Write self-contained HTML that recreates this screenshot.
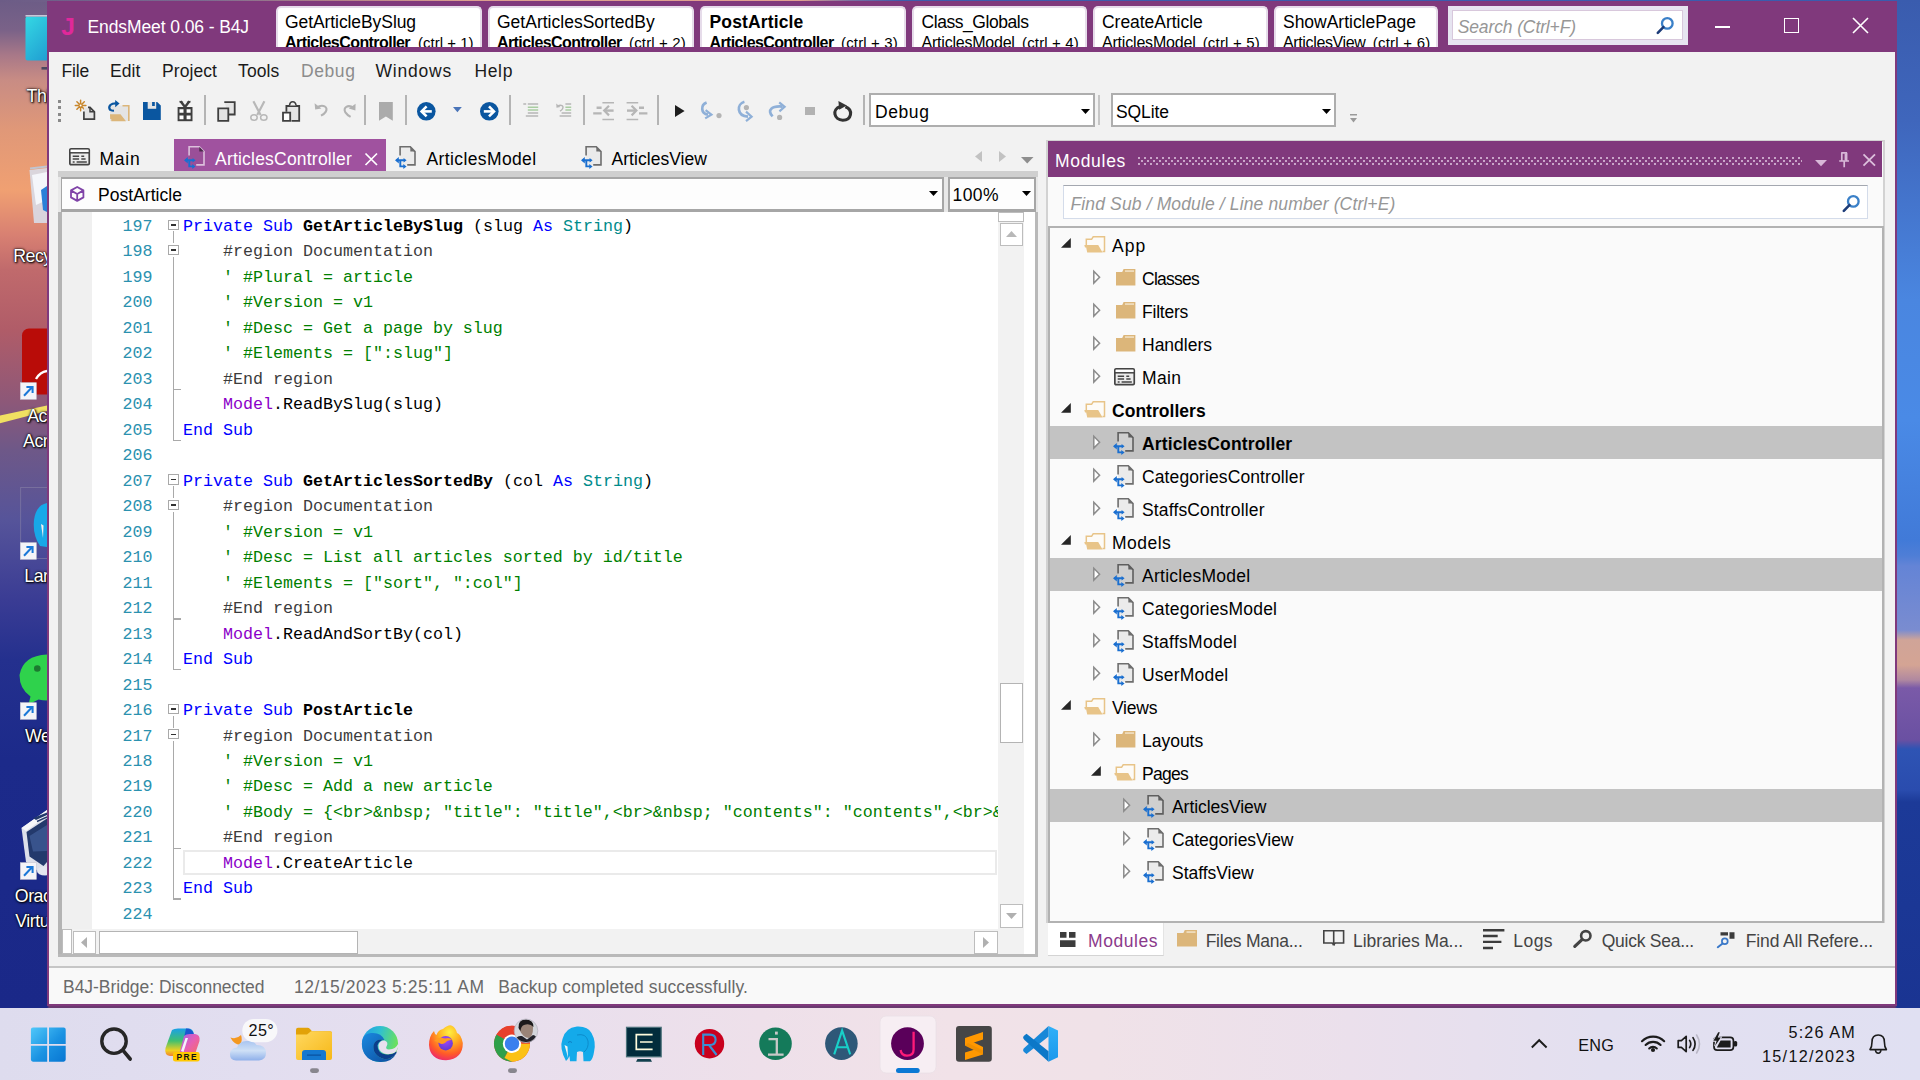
<!DOCTYPE html>
<html lang="en"><head><meta charset="utf-8"><title>EndsMeet 0.06 - B4J</title>
<style>
html,body{margin:0;padding:0;}
body{width:1920px;height:1080px;overflow:hidden;position:relative;background:#1c2c8a;font-family:"Liberation Sans",sans-serif;}
div{position:absolute;box-sizing:border-box;}
.sec{position:absolute;left:0;top:0;width:0;height:0;}
.t{position:absolute;white-space:pre;}
.m{font-family:"Liberation Mono",monospace;}
.i{position:absolute;overflow:visible;}
</style></head><body>
<div id="wallpaper" class="sec">
<div style="left:0px;top:0px;width:60px;height:1010px;background:linear-gradient(180deg,#6c5c86 0px,#7a6288 30px,#a87888 55px,#c88c84 80px,#e09878 130px,#f0a072 190px,#d88072 235px,#c06a6c 270px,#b05c68 330px,#8e5878 400px,#6e5888 450px,#56549a 520px,#3a3c94 600px,#24308e 660px,#1c2a8a 760px,#1a2888 1010px);"></div>
<div style="left:1890px;top:0px;width:30px;height:1010px;background:linear-gradient(180deg,#3a5cae 0px,#3f66bc 120px,#4a86e0 300px,#4a8ae6 420px,#417ad8 540px,#4f7ed6 556px,#6484d6 566px,#7a8cd0 630px,#d0a498 640px,#d4a494 665px,#b088a0 680px,#7a5aa8 688px,#6a50a2 740px,#2e54b4 749px,#2a4cae 790px,#1c3a98 802px,#1a3492 1010px);"></div>
<div style="left:0px;top:0px;width:1920px;height:2px;background:linear-gradient(90deg,#6c5c86 0px,#7a6a90 200px,#b08088 330px,#dca090 470px,#e0a090 800px,#7a70a0 850px,#3e5cac 900px,#3a5cae 1920px);"></div>
</div>
<div id="desktop" class="sec">
<div style="left:0;top:0;width:47px;height:1008px;overflow:hidden;">
<svg class="i" style="left:0;top:0" width="47" height="1008" viewBox="0 0 47 1008">
<defs><linearGradient id="gpc" x1="0" y1="0" x2="1" y2="1"><stop offset="0" stop-color="#34d8e4"/><stop offset="1" stop-color="#1a8ccc"/></linearGradient></defs>
<path d="M0 415.5L47 405.5V411L0 423.3Z" fill="#f0e062"/>
<rect x="25.5" y="16.5" width="40" height="44" rx="2" fill="url(#gpc)"/><rect x="25.5" y="15" width="40" height="1.6" fill="#c8c8d8"/><rect x="41.5" y="67" width="10" height="2.6" fill="#4a4860"/>
<path d="M29.5 170L47 168V223H34Z" fill="#d8dce8" opacity="0.9"/><path d="M32 175L47 172V200L36 205Z" fill="#f4f6fa"/><path d="M41 190L47 186V212L43 210Z" fill="#2a80d8"/><path d="M30 168.5L47 166.5" stroke="#c0c4d0" stroke-width="2"/>
<rect x="22" y="328.5" width="50" height="66" rx="7" fill="#b90c08"/><path d="M36 379Q40 372 47 371" fill="none" stroke="#fff" stroke-width="2.4"/>
<rect x="20.7" y="487.5" width="60" height="71" fill="none" stroke="#8a84a8" stroke-width="0.8" opacity="0.7"/>
<path d="M47 503Q36 505 34 520Q32.5 535 40 546L47 547Z" fill="#18a8e8"/><path d="M41 524L43.5 525.5L43 538Z" fill="#f0f0f0"/>
<path d="M47 654.5Q23 655.5 19.5 675Q19.5 689 30.5 696.5L28.5 704.5L38.5 699.5Q42.5 700.5 47 700.5Z" fill="#2fd24c"/><circle cx="37.3" cy="668.5" r="3.3" fill="#1c7a30"/>
<path d="M21.5 828L47 810V874H42L26 862Z" fill="#dcdfea"/>
<path d="M21.5 828L47 810V816L26 831Z" fill="#f6f7fa"/>
<path d="M26.5 832L47 818.5V862L43.5 866L29.5 856.5Z" fill="#23396c"/>
<path d="M29.5 836L47 825V851L33 851.5Z" fill="#4a6aa8" opacity="0.55"/>
<path d="M33 818L47 812.5V815L36 820Z" fill="#23396c"/><path d="M37 821.5L47 817" stroke="#23396c" stroke-width="1.4"/>
<ellipse cx="45" cy="871" rx="8" ry="4.5" fill="#e4e6f0"/>
<rect x="20.3" y="382.7" width="16" height="16.6" fill="#f4f4f8" stroke="#c8c8d4" stroke-width="0.6"/><path d="M24 395.7L32 387.3M26.4 386.9H32.6V393.09999999999997" fill="none" stroke="#1a78d8" stroke-width="2"/>
<rect x="20.3" y="542.7" width="16" height="16.6" fill="#f4f4f8" stroke="#c8c8d4" stroke-width="0.6"/><path d="M24 555.7L32 547.3000000000001M26.4 546.9000000000001H32.6V553.1" fill="none" stroke="#1a78d8" stroke-width="2"/>
<rect x="20.3" y="702.7" width="16" height="16.6" fill="#f4f4f8" stroke="#c8c8d4" stroke-width="0.6"/><path d="M24 715.7L32 707.3000000000001M26.4 706.9000000000001H32.6V713.1" fill="none" stroke="#1a78d8" stroke-width="2"/>
<rect x="20.3" y="862.7" width="16" height="16.6" fill="#f4f4f8" stroke="#c8c8d4" stroke-width="0.6"/><path d="M24 875.7L32 867.3000000000001M26.4 866.9000000000001H32.6V873.1" fill="none" stroke="#1a78d8" stroke-width="2"/>
</svg>
<span class="t" style="left:26.60px;top:88px;font-size:17.8px;line-height:17.8px;color:#fff;text-shadow:1px 1px 2px #000,0 0 3px #000,0 0 1px #000;letter-spacing:-0.5px;">This PC</span>
<span class="t" style="left:13.20px;top:248px;font-size:17.8px;line-height:17.8px;color:#fff;text-shadow:1px 1px 2px #000,0 0 3px #000,0 0 1px #000;letter-spacing:-0.5px;">Recycle Bin</span>
<span class="t" style="left:27.20px;top:408px;font-size:17.8px;line-height:17.8px;color:#fff;text-shadow:1px 1px 2px #000,0 0 3px #000,0 0 1px #000;letter-spacing:-0.5px;">Acrobat</span>
<span class="t" style="left:23.10px;top:433px;font-size:17.8px;line-height:17.8px;color:#fff;text-shadow:1px 1px 2px #000,0 0 3px #000,0 0 1px #000;letter-spacing:-0.5px;">Acrobat DC</span>
<span class="t" style="left:24.30px;top:568px;font-size:17.8px;line-height:17.8px;color:#fff;text-shadow:1px 1px 2px #000,0 0 3px #000,0 0 1px #000;letter-spacing:-0.5px;">Laragon</span>
<span class="t" style="left:25.00px;top:728px;font-size:17.8px;line-height:17.8px;color:#fff;text-shadow:1px 1px 2px #000,0 0 3px #000,0 0 1px #000;letter-spacing:-0.5px;">WeChat</span>
<span class="t" style="left:14.80px;top:888px;font-size:17.8px;line-height:17.8px;color:#fff;text-shadow:1px 1px 2px #000,0 0 3px #000,0 0 1px #000;letter-spacing:-0.5px;">Oracle VM</span>
<span class="t" style="left:15.30px;top:913px;font-size:17.8px;line-height:17.8px;color:#fff;text-shadow:1px 1px 2px #000,0 0 3px #000,0 0 1px #000;letter-spacing:-0.5px;">VirtualBox</span>
</div>
</div>
<div id="frame" class="sec">
<div style="left:0px;top:1006px;width:1920px;height:2px;background:linear-gradient(90deg,#1a2888 0px,#1a2888 47px,#6a3a70 49px,#6a3a70 1895px,#1a3492 1897px);"></div>
<div style="left:47px;top:1px;width:1850px;height:1005px;background:#f2f2f2;border:2px solid #80397c;border-top:none;"></div>
</div>
<header id="titlebar" class="sec">
<div style="left:47px;top:1px;width:1850px;height:51px;background:#80397c;"></div>
<span class="t" style="left:61.30px;top:15px;font-size:24.5px;line-height:24.5px;color:#e0289a;letter-spacing:-0.626px;font-weight:bold;">J</span>
<span class="t" style="left:87.50px;top:19px;font-size:17.5px;line-height:17.5px;color:#fff;letter-spacing:-0.101px;">EndsMeet 0.06 - B4J</span>
<div style="left:276px;top:6px;width:206px;height:41px;background:#fff;border:2px solid #e6dcea;border-bottom:none;border-radius:5px 5px 0 0;overflow:hidden;">
<span class="t" style="left:7.00px;top:6px;font-size:17.5px;line-height:17.5px;color:#000;letter-spacing:-0.080px;">GetArticleBySlug</span>
<span class="t" style="left:7.00px;top:27px;font-size:16px;line-height:16px;color:#000;letter-spacing:-0.563px;font-weight:bold;">ArticlesController</span>
<span class="t" style="left:140.00px;top:27px;font-size:15px;line-height:15px;color:#000;letter-spacing:0.008px;">(ctrl + 1)</span>
</div>
<div style="left:488px;top:6px;width:206px;height:41px;background:#fff;border:2px solid #e6dcea;border-bottom:none;border-radius:5px 5px 0 0;overflow:hidden;">
<span class="t" style="left:7.00px;top:6px;font-size:17.5px;line-height:17.5px;color:#000;letter-spacing:0.007px;">GetArticlesSortedBy</span>
<span class="t" style="left:7.00px;top:27px;font-size:16px;line-height:16px;color:#000;letter-spacing:-0.580px;font-weight:bold;">ArticlesController</span>
<span class="t" style="left:139.00px;top:27px;font-size:15px;line-height:15px;color:#000;letter-spacing:0.158px;">(ctrl + 2)</span>
</div>
<div style="left:700px;top:6px;width:206px;height:41px;background:#fff;border:2px solid #e6dcea;border-bottom:none;border-radius:5px 5px 0 0;overflow:hidden;">
<span class="t" style="left:7.50px;top:6px;font-size:17.5px;line-height:17.5px;color:#000;letter-spacing:0.147px;font-weight:bold;">PostArticle</span>
<span class="t" style="left:7.50px;top:27px;font-size:16px;line-height:16px;color:#000;letter-spacing:-0.619px;font-weight:bold;">ArticlesController</span>
<span class="t" style="left:139.00px;top:27px;font-size:15px;line-height:15px;color:#000;letter-spacing:0.158px;">(ctrl + 3)</span>
</div>
<div style="left:912px;top:6px;width:175px;height:41px;background:#fff;border:2px solid #e6dcea;border-bottom:none;border-radius:5px 5px 0 0;overflow:hidden;">
<span class="t" style="left:7.50px;top:6px;font-size:17.5px;line-height:17.5px;color:#000;letter-spacing:-0.448px;">Class_Globals</span>
<span class="t" style="left:7.50px;top:27px;font-size:16px;line-height:16px;color:#000;letter-spacing:-0.218px;">ArticlesModel</span>
<span class="t" style="left:108.00px;top:27px;font-size:15px;line-height:15px;color:#000;letter-spacing:0.158px;">(ctrl + 4)</span>
</div>
<div style="left:1093px;top:6px;width:175px;height:41px;background:#fff;border:2px solid #e6dcea;border-bottom:none;border-radius:5px 5px 0 0;overflow:hidden;">
<span class="t" style="left:7.00px;top:6px;font-size:17.5px;line-height:17.5px;color:#000;letter-spacing:-0.034px;">CreateArticle</span>
<span class="t" style="left:7.00px;top:27px;font-size:16px;line-height:16px;color:#000;letter-spacing:-0.195px;">ArticlesModel</span>
<span class="t" style="left:107.70px;top:27px;font-size:15px;line-height:15px;color:#000;letter-spacing:0.188px;">(ctrl + 5)</span>
</div>
<div style="left:1274px;top:6px;width:164px;height:41px;background:#fff;border:2px solid #e6dcea;border-bottom:none;border-radius:5px 5px 0 0;overflow:hidden;">
<span class="t" style="left:7.00px;top:6px;font-size:17.5px;line-height:17.5px;color:#000;letter-spacing:-0.018px;">ShowArticlePage</span>
<span class="t" style="left:7.00px;top:27px;font-size:16px;line-height:16px;color:#000;letter-spacing:-0.362px;">ArticlesView</span>
<span class="t" style="left:96.70px;top:27px;font-size:15px;line-height:15px;color:#000;letter-spacing:0.238px;">(ctrl + 6)</span>
</div>
<div style="left:1448px;top:6px;width:240px;height:39px;background:#e6e4f0;"></div>
<div style="left:1452px;top:10px;width:231px;height:30px;background:#fff;border:1px solid #d8c8dc;"></div>
<span class="t" style="left:1457.70px;top:19px;font-size:17.5px;line-height:17.5px;color:#979797;letter-spacing:-0.119px;font-style:italic;">Search (Ctrl+F)</span>
<div style="left:1715px;top:25.5px;width:15px;height:2px;background:#fff;"></div>
<div style="left:1784px;top:18px;width:15px;height:15px;border:1.6px solid #fff;"></div>
<svg class="i" style="left:1852px;top:17px;" width="17" height="17" viewBox="0 0 17 17"><path d="M1 1L16 16M16 1L1 16" stroke="#fff" stroke-width="1.6" fill="none"/></svg>
<svg class="i" style="left:1655.5px;top:17px;" width="18.0" height="17.0" viewBox="0 0 18 17"><circle cx="11.3" cy="6.4" r="5.3" fill="#fff" stroke="#3a80c8" stroke-width="2.3"/><path d="M7.4 10.2L1.8 15.8" stroke="#1c3c78" stroke-width="2.6" stroke-linecap="round"/></svg>
</header>
<nav id="menubar" class="sec">
<span class="t" style="left:61.50px;top:63px;font-size:17.5px;line-height:17.5px;color:#1a1a1a;letter-spacing:-0.175px;">File</span>
<span class="t" style="left:110.00px;top:63px;font-size:17.5px;line-height:17.5px;color:#1a1a1a;letter-spacing:0.086px;">Edit</span>
<span class="t" style="left:162.00px;top:63px;font-size:17.5px;line-height:17.5px;color:#1a1a1a;letter-spacing:0.076px;">Project</span>
<span class="t" style="left:238.00px;top:63px;font-size:17.5px;line-height:17.5px;color:#1a1a1a;letter-spacing:0.129px;">Tools</span>
<span class="t" style="left:301.00px;top:63px;font-size:17.5px;line-height:17.5px;color:#8c8c8c;letter-spacing:0.586px;">Debug</span>
<span class="t" style="left:375.50px;top:63px;font-size:17.5px;line-height:17.5px;color:#1a1a1a;letter-spacing:0.787px;">Windows</span>
<span class="t" style="left:474.50px;top:63px;font-size:17.5px;line-height:17.5px;color:#1a1a1a;letter-spacing:0.627px;">Help</span>
</nav>
<div id="toolbar" class="sec">
<div style="left:58px;top:100.0px;width:3px;height:3px;background:#8a8a8a;"></div>
<div style="left:58px;top:106.3px;width:3px;height:3px;background:#8a8a8a;"></div>
<div style="left:58px;top:112.6px;width:3px;height:3px;background:#8a8a8a;"></div>
<div style="left:58px;top:118.9px;width:3px;height:3px;background:#8a8a8a;"></div>
<div style="left:204px;top:95px;width:2px;height:29.5px;background:#b4b4b4;"></div>
<div style="left:363.5px;top:95px;width:2px;height:29.5px;background:#b4b4b4;"></div>
<div style="left:404.5px;top:95px;width:2px;height:29.5px;background:#b4b4b4;"></div>
<div style="left:508.5px;top:95px;width:2px;height:29.5px;background:#b4b4b4;"></div>
<div style="left:582.5px;top:95px;width:2px;height:29.5px;background:#b4b4b4;"></div>
<div style="left:656.5px;top:95px;width:2px;height:29.5px;background:#b4b4b4;"></div>
<div style="left:862.5px;top:95px;width:2px;height:29.5px;background:#b4b4b4;"></div>
<div style="left:1098px;top:95px;width:2px;height:29.5px;background:#c6c6c6;"></div>
<div style="left:869px;top:93px;width:225.5px;height:33.5px;background:#fff;border:2px solid #aeaeae;"></div>
<span class="t" style="left:875.00px;top:104px;font-size:17.5px;line-height:17.5px;color:#000;letter-spacing:0.586px;">Debug</span>
<svg class="i" style="left:1080.5px;top:109px;" width="9" height="5" viewBox="0 0 9 5"><path d="M0 0H9L4.5 5Z" fill="#000"/></svg>
<div style="left:1111px;top:93px;width:225px;height:33.5px;background:#fff;border:2px solid #aeaeae;"></div>
<span class="t" style="left:1116.00px;top:104px;font-size:17.5px;line-height:17.5px;color:#000;letter-spacing:-0.083px;">SQLite</span>
<svg class="i" style="left:1322px;top:109px;" width="9" height="5" viewBox="0 0 9 5"><path d="M0 0H9L4.5 5Z" fill="#000"/></svg>
<svg class="i" style="left:1350px;top:114px;" width="7" height="9" viewBox="0 0 7 9"><path d="M0 0H7V1.6H0Z M0 4H7L3.5 8.5Z" fill="#9a9a9a"/></svg>
<svg class="i" style="left:75px;top:99px;" width="21" height="22" viewBox="0 0 21 22"><g stroke="#c8862a" stroke-width="1.5" stroke-linecap="round"><path d="M5.6 1.2V11.8M0.3 6.5H10.9M1.9 2.8L9.3 10.2M9.3 2.8L1.9 10.2"/></g><circle cx="5.6" cy="6.5" r="1" fill="#fff"/><path d="M8.9 8.4H15L19.4 12.8V20.1H8.9Z" fill="#e4e4e4"/><path d="M8.9 12.5V20.1H19.4V12.8L15 8.4H13" fill="none" stroke="#3f3f3f" stroke-width="1.7"/><path d="M15 8.4V12.8H19.4" fill="none" stroke="#3f3f3f" stroke-width="1.5"/></svg>
<svg class="i" style="left:108px;top:100px;" width="22" height="22" viewBox="0 0 22 22"><path d="M2 5.5H21.3V21H2Z" fill="#e4e4e4"/><path d="M14.5 5.8H20.8V21" fill="none" stroke="#dcb67a" stroke-width="1.6"/><path d="M2 14.2H12.5L18 21.2H3.3L3.3 19H2.2Z" fill="#dcb67a"/><path d="M2.2 10.2C-0.5 6 3 3 9 3.4" fill="none" stroke="#0a56a0" stroke-width="2.2"/><path d="M7.2 0L11.6 3.6L7.2 7.2Z" fill="#0a56a0"/><path d="M2 9.5C3 10.5 4 10.8 6 10.6" fill="none" stroke="#0a56a0" stroke-width="2"/></svg>
<svg class="i" style="left:143.2px;top:102px;" width="18" height="18" viewBox="0 0 18 18"><path d="M0 0H14.2L17.8 3.6V17.9H0Z" fill="#0a56a0"/><path d="M4.7 0H13.2V6.8H4.7Z" fill="#e4e4e4"/><path d="M9.1 0H11.8V4H9.1Z" fill="#0a56a0"/></svg>
<svg class="i" style="left:177px;top:100px;" width="16" height="22" viewBox="0 0 16 22"><path d="M0.6 7H15.5V21.2H0.6Z" fill="#3f3f3f"/><path d="M2.5 9.2H6.5V12.8H2.5ZM9.6 9.2H13.6V12.8H9.6ZM2.5 15.6H6.5V19.2H2.5ZM9.6 15.6H13.6V19.2H9.6Z" fill="#fff"/><path d="M8 7L3.6 1.2M8 7L12.4 1.2" stroke="#3f3f3f" stroke-width="2.4" fill="none"/><path d="M2.5 1.5L6 2.5M13.5 1.5L10 2.5" stroke="#3f3f3f" stroke-width="1.6"/></svg>
<svg class="i" style="left:216.5px;top:100.5px;" width="19" height="21" viewBox="0 0 19 21"><path d="M7.3 1.2H17.7V13.5H12" fill="#e4e4e4" stroke="#3f3f3f" stroke-width="1.8"/><path d="M1.2 7.4H11.3V19.8H1.2Z" fill="#e4e4e4" stroke="#3f3f3f" stroke-width="1.8"/></svg>
<svg class="i" style="left:250px;top:101px;" width="18" height="20" viewBox="0 0 18 20"><path d="M3.4 0.3L10.6 14M14.4 0.3L7.2 14" stroke="#b8b8b8" stroke-width="2.2" fill="none"/><ellipse cx="4" cy="16.5" rx="3.2" ry="2.8" fill="none" stroke="#b8b8b8" stroke-width="1.5"/><ellipse cx="13.8" cy="16.5" rx="3.2" ry="2.8" fill="none" stroke="#b8b8b8" stroke-width="1.5"/></svg>
<svg class="i" style="left:281.5px;top:100.5px;" width="19" height="21" viewBox="0 0 19 21"><path d="M4.4 10.8V5H17.2V19.8H9.5" fill="#e4e4e4" stroke="#3f3f3f" stroke-width="1.8"/><path d="M7.6 4.6C7.6 -0.6 14 -0.6 14 4.6" fill="#f0f0f0" stroke="#3f3f3f" stroke-width="1.6"/><path d="M1 11.7H8.2V19.9H1Z" fill="#fff" stroke="#3f3f3f" stroke-width="1.8"/></svg>
<svg class="i" style="left:314px;top:102px;" width="15" height="15" viewBox="0 0 15 15"><path d="M2.5 5.6C9 1.5 14.5 5 11.8 9.6C10.8 11.3 9 12.6 7 13.6" fill="none" stroke="#b2b2b2" stroke-width="2.1"/><path d="M0.6 1.2L1.2 7.6L7.4 6.4Z" fill="#b2b2b2"/></svg>
<svg class="i" style="left:343px;top:103px;" width="14" height="15" viewBox="0 0 14 15"><path d="M10.8 5C5 1 -0.5 4.5 2.4 9.4C3.4 11 5 12.4 7.6 13.8" fill="none" stroke="#b2b2b2" stroke-width="2.1"/><path d="M12.6 0.8L12.4 7.4L5.8 5.6Z" fill="#b2b2b2"/></svg>
<svg class="i" style="left:378.7px;top:101.8px;" width="14" height="19" viewBox="0 0 14 19"><path d="M0 0H13.8V18.8L6.9 14.6L0 18.8Z" fill="#ababab"/></svg>
<svg class="i" style="left:416.8px;top:101.6px;" width="19" height="19" viewBox="0 0 19 19"><circle cx="9.3" cy="9.3" r="9.3" fill="#0a56a0"/><path d="M14.8 9.4H5" stroke="#fff" stroke-width="2.6"/><path d="M9.6 4.4L4.6 9.4L9.6 14.4" fill="none" stroke="#fff" stroke-width="2.6"/></svg>
<svg class="i" style="left:453px;top:107px;" width="9" height="5.4" viewBox="0 0 9 5.4"><path d="M0 0H8.8L4.4 5.3Z" fill="#4a74b8"/></svg>
<svg class="i" style="left:479.7px;top:101.6px;" width="19" height="19" viewBox="0 0 19 19"><circle cx="9.3" cy="9.3" r="9.3" fill="#0a56a0"/><path d="M3.8 9.4H13.6" stroke="#fff" stroke-width="2.6"/><path d="M9 4.4L14 9.4L9 14.4" fill="none" stroke="#fff" stroke-width="2.6"/></svg>
<svg class="i" style="left:522.5px;top:103px;" width="16" height="14" viewBox="0 0 16 14"><path d="M0.3 1H3.2M4.8 1H15.2M4.8 9.9H15.2M2.8 13.1H15.2" stroke="#b6b6b6" stroke-width="1.5"/><path d="M4.8 4.2H15.2M4.8 7H15.2" stroke="#a9cda2" stroke-width="1.5"/></svg>
<svg class="i" style="left:555.5px;top:103px;" width="16" height="14" viewBox="0 0 16 14"><path d="M9.4 1H15.2M5.6 9.9H15.2M3.6 13.1H15.2" stroke="#b6b6b6" stroke-width="1.5"/><path d="M9.4 4.2H15.2M9.4 7H15.2" stroke="#a9cda2" stroke-width="1.5"/><path d="M1.4 3.4C5 0.8 8.4 3 6.4 6C5.8 7 5 7.6 4 8.2" fill="none" stroke="#b6b6b6" stroke-width="1.4"/><path d="M0.2 0.6L0.5 4.8L4.4 4Z" fill="#b6b6b6"/></svg>
<svg class="i" style="left:593.4px;top:101.8px;" width="22" height="19" viewBox="0 0 22 19"><path d="M9.4 0.8H21M9.4 17.4H21" stroke="#b6b6b6" stroke-width="1.5"/><path d="M3.6 5.8H8.6M0.2 11.4H8.6" stroke="#b6b6b6" stroke-width="2.4"/><path d="M12 8.6H20.6" stroke="#b6b6b6" stroke-width="2.4"/><path d="M16 3.8L11.2 8.6L16 13.4" fill="none" stroke="#b6b6b6" stroke-width="2.2"/></svg>
<svg class="i" style="left:625.6px;top:101.8px;" width="22" height="19" viewBox="0 0 22 19"><path d="M0.6 0.8H12.2M0.6 17.4H12.2" stroke="#b6b6b6" stroke-width="1.5"/><path d="M13 5.8H18M13 11.4H21.4" stroke="#b6b6b6" stroke-width="2.4"/><path d="M1 8.6H9.6" stroke="#b6b6b6" stroke-width="2.4"/><path d="M5.6 3.8L10.4 8.6L5.6 13.4" fill="none" stroke="#b6b6b6" stroke-width="2.2"/></svg>
<svg class="i" style="left:674.6px;top:105px;" width="10" height="12" viewBox="0 0 10 12"><path d="M0 0L9.6 6L0 12Z" fill="#1e1e1e"/></svg>
<svg class="i" style="left:700px;top:101.5px;" width="22" height="18" viewBox="0 0 22 18"><path d="M6.6 0.6C0.5 3 0.6 11.4 8 12.6" fill="none" stroke="#8fb0d8" stroke-width="2.7"/><path d="M5.6 8.2L11.4 12.6L5.2 16.4" fill="none" stroke="#8fb0d8" stroke-width="2.2"/><circle cx="19" cy="13.6" r="2.6" fill="#b4b4b4"/></svg>
<svg class="i" style="left:736px;top:100.8px;" width="18" height="21" viewBox="0 0 18 21"><path d="M8.4 0.8C0.5 3 0.5 15 12 15.6" fill="none" stroke="#8fb0d8" stroke-width="2.7"/><path d="M10 10.6L15.6 15.6L10 20.2" fill="none" stroke="#8fb0d8" stroke-width="2.2"/><circle cx="10.4" cy="6.6" r="2.6" fill="#b4b4b4"/></svg>
<svg class="i" style="left:768px;top:102px;" width="19" height="19" viewBox="0 0 19 19"><path d="M4.6 14.4C-1.5 8 4 3.6 14.6 4.6" fill="none" stroke="#8fb0d8" stroke-width="2.7"/><path d="M11.2 0.4L16.6 4.8L11.4 9.4" fill="none" stroke="#8fb0d8" stroke-width="2.2"/><circle cx="11.6" cy="15.4" r="2.6" fill="#b4b4b4"/></svg>
<div style="left:805px;top:106.6px;width:9.7px;height:8.8px;background:#b2b2b2;"></div>
<svg class="i" style="left:832.5px;top:100.5px;" width="20" height="21" viewBox="0 0 20 21"><path d="M7.4 5.6C-1.5 8 1 19.2 9.8 19.2C18.5 19.2 20.6 9 12.4 5.8" fill="none" stroke="#333" stroke-width="3.1"/><path d="M5.4 0L6.2 8.8L13.8 4.6Z" fill="#333"/></svg>
</div>
<nav id="doctabs" class="sec">
<div style="left:174px;top:139px;width:212px;height:32.5px;background:#a0529f;"></div>
<span class="t" style="left:99.50px;top:151px;font-size:17.5px;line-height:17.5px;color:#000;letter-spacing:0.767px;">Main</span>
<span class="t" style="left:215.00px;top:151px;font-size:17.5px;line-height:17.5px;color:#fff;letter-spacing:0.209px;">ArticlesController</span>
<svg class="i" style="left:365px;top:153px;" width="12.5" height="12.5" viewBox="0 0 12.5 12.5"><path d="M0.5 0.5L12 12M12 0.5L0.5 12" stroke="#fff" stroke-width="1.7" fill="none"/></svg>
<span class="t" style="left:426.50px;top:151px;font-size:17.5px;line-height:17.5px;color:#000;letter-spacing:0.382px;">ArticlesModel</span>
<span class="t" style="left:611.50px;top:151px;font-size:17.5px;line-height:17.5px;color:#000;letter-spacing:0.043px;">ArticlesView</span>
<svg class="i" style="left:974.8px;top:151px;" width="7" height="11" viewBox="0 0 7 11"><path d="M7 0V11L0 5.5Z" fill="#c2c2c2"/></svg>
<svg class="i" style="left:999px;top:151px;" width="7" height="11" viewBox="0 0 7 11"><path d="M0 0V11L7 5.5Z" fill="#c2c2c2"/></svg>
<svg class="i" style="left:1020.5px;top:156.5px;" width="12.5" height="6.5" viewBox="0 0 12.5 6.5"><path d="M0 0H12.5L6.25 6.5Z" fill="#8e8e8e"/></svg>
<svg class="i" style="left:69.4px;top:148.1px;" width="22" height="18" viewBox="0 0 22 18"><rect x="0.85" y="0.85" width="19.4" height="15.8" rx="1.2" fill="#ececec" stroke="#444" stroke-width="1.7"/><rect x="1.7" y="1.7" width="17.7" height="2.3" fill="#fff"/><path d="M1 4.8H20" stroke="#444" stroke-width="1.5"/><path d="M3.7 8.2H10.1M12.3 8.2H15.2M3.7 11H10.1M12.3 11H16.6M3.7 14H5.6M7.6 14H17.8" stroke="#444" stroke-width="1.5"/></svg>
<svg class="i" style="left:184.2px;top:146.2px;" width="22" height="24" viewBox="0 0 22 24"><path d="M5.1 0.8H15.3L20 5.6V18.9H5.1Z" fill="#9a4f98"/><path d="M5.1 9.6V0.8H15.3L20 5.6V18.9H12.2" fill="none" stroke="#dcc0dc" stroke-width="1.6"/><path d="M15.3 0.8V5.6H20Z" fill="#4a2a4a"/><path d="M1.5 14.2H10M5.3 14.2V20.4H9" fill="none" stroke="#1a6fd0" stroke-width="1.9"/><path d="M0 14.2L3.8 10.9V17.5Z M11.6 14.2L8.6 11.9V16.5Z M11.6 20.4L8.3 17.9V22.9Z" fill="#1a6fd0"/></svg>
<svg class="i" style="left:395px;top:146.2px;" width="22" height="24" viewBox="0 0 22 24"><path d="M5.1 0.8H15.3L20 5.6V18.9H5.1Z" fill="#ebebeb"/><path d="M5.1 9.6V0.8H15.3L20 5.6V18.9H12.2" fill="none" stroke="#6e6e6e" stroke-width="1.6"/><path d="M15.3 0.8V5.6H20Z" fill="#6e6e6e"/><path d="M1.5 14.2H10M5.3 14.2V20.4H9" fill="none" stroke="#1a6fd0" stroke-width="1.9"/><path d="M0 14.2L3.8 10.9V17.5Z M11.6 14.2L8.6 11.9V16.5Z M11.6 20.4L8.3 17.9V22.9Z" fill="#1a6fd0"/></svg>
<svg class="i" style="left:580.6px;top:146.2px;" width="22" height="24" viewBox="0 0 22 24"><path d="M5.1 0.8H15.3L20 5.6V18.9H5.1Z" fill="#ebebeb"/><path d="M5.1 9.6V0.8H15.3L20 5.6V18.9H12.2" fill="none" stroke="#6e6e6e" stroke-width="1.6"/><path d="M15.3 0.8V5.6H20Z" fill="#6e6e6e"/><path d="M1.5 14.2H10M5.3 14.2V20.4H9" fill="none" stroke="#1a6fd0" stroke-width="1.9"/><path d="M0 14.2L3.8 10.9V17.5Z M11.6 14.2L8.6 11.9V16.5Z M11.6 20.4L8.3 17.9V22.9Z" fill="#1a6fd0"/></svg>
</nav>
<main id="editor" class="sec">
<div style="left:58px;top:171px;width:980px;height:786px;background:#fff;"></div>
<div style="left:58px;top:171px;width:980px;height:6px;background:#cfcfcf;"></div>
<div style="left:58px;top:177px;width:3.5px;height:780px;background:#b4b4b4;"></div>
<div style="left:1035.3px;top:177px;width:2.7px;height:780px;background:#b9b9b9;"></div>
<div style="left:58px;top:954.3px;width:980px;height:2.7px;background:#b9b9b9;"></div>
<div style="left:58px;top:177px;width:980px;height:35px;background:#e8e8e8;"></div>
<div style="left:61px;top:177px;width:882.5px;height:34.5px;background:#fdfdfd;border:2px solid #a6a6a6;border-left:1px solid #a6a6a6;border-bottom:3px solid #a6a6a6;"></div>
<div style="left:948px;top:177px;width:88px;height:34.5px;background:#fdfdfd;border:2px solid #a6a6a6;border-bottom:3px solid #a6a6a6;"></div>
<span class="t" style="left:98.00px;top:187px;font-size:17.5px;line-height:17.5px;color:#000;letter-spacing:0.033px;">PostArticle</span>
<svg class="i" style="left:929px;top:191px;" width="9" height="5" viewBox="0 0 9 5"><path d="M0 0H9L4.5 5Z" fill="#000"/></svg>
<span class="t" style="left:952.50px;top:187px;font-size:17.5px;line-height:17.5px;color:#000;letter-spacing:0.435px;">100%</span>
<svg class="i" style="left:1022px;top:191px;" width="9" height="5" viewBox="0 0 9 5"><path d="M0 0H9L4.5 5Z" fill="#000"/></svg>
<div style="left:61.5px;top:211.5px;width:30.5px;height:717.5px;background:#f0f0f0;"></div>
<div style="left:183px;top:850px;width:813.5px;height:25px;background:#fff;border:2.5px solid #eaeaea;"></div>
<div style="left:92px;top:212px;width:906px;height:717px;overflow:hidden;">
<span class="t m" style="left:30.50px;top:7px;font-size:16.667px;line-height:16.667px;color:#2b91af;">197</span>
<span class="t m" style="left:91.00px;top:7px;font-size:16.667px;line-height:16.667px;color:#0000ff;">Private Sub </span>
<span class="t m" style="left:211.02px;top:7px;font-size:16.667px;line-height:16.667px;color:#000;font-weight:bold;">GetArticleBySlug</span>
<span class="t m" style="left:371.04px;top:7px;font-size:16.667px;line-height:16.667px;color:#000;"> (slug </span>
<span class="t m" style="left:441.06px;top:7px;font-size:16.667px;line-height:16.667px;color:#0000ff;">As </span>
<span class="t m" style="left:471.06px;top:7px;font-size:16.667px;line-height:16.667px;color:#008b8b;">String</span>
<span class="t m" style="left:531.07px;top:7px;font-size:16.667px;line-height:16.667px;color:#000;">)</span>
<span class="t m" style="left:30.50px;top:32px;font-size:16.667px;line-height:16.667px;color:#2b91af;">198</span>
<span class="t m" style="left:91.00px;top:32px;font-size:16.667px;line-height:16.667px;color:#3c3c3c;">    #region Documentation</span>
<span class="t m" style="left:30.50px;top:58px;font-size:16.667px;line-height:16.667px;color:#2b91af;">199</span>
<span class="t m" style="left:91.00px;top:58px;font-size:16.667px;line-height:16.667px;color:#008000;">    &#x27; #Plural = article</span>
<span class="t m" style="left:30.50px;top:83px;font-size:16.667px;line-height:16.667px;color:#2b91af;">200</span>
<span class="t m" style="left:91.00px;top:83px;font-size:16.667px;line-height:16.667px;color:#008000;">    &#x27; #Version = v1</span>
<span class="t m" style="left:30.50px;top:109px;font-size:16.667px;line-height:16.667px;color:#2b91af;">201</span>
<span class="t m" style="left:91.00px;top:109px;font-size:16.667px;line-height:16.667px;color:#008000;">    &#x27; #Desc = Get a page by slug</span>
<span class="t m" style="left:30.50px;top:134px;font-size:16.667px;line-height:16.667px;color:#2b91af;">202</span>
<span class="t m" style="left:91.00px;top:134px;font-size:16.667px;line-height:16.667px;color:#008000;">    &#x27; #Elements = [&quot;:slug&quot;]</span>
<span class="t m" style="left:30.50px;top:160px;font-size:16.667px;line-height:16.667px;color:#2b91af;">203</span>
<span class="t m" style="left:91.00px;top:160px;font-size:16.667px;line-height:16.667px;color:#3c3c3c;">    #End region</span>
<span class="t m" style="left:30.50px;top:185px;font-size:16.667px;line-height:16.667px;color:#2b91af;">204</span>
<span class="t m" style="left:91.00px;top:185px;font-size:16.667px;line-height:16.667px;color:#8b00c8;">    Model</span>
<span class="t m" style="left:181.01px;top:185px;font-size:16.667px;line-height:16.667px;color:#000;">.ReadBySlug(slug)</span>
<span class="t m" style="left:30.50px;top:211px;font-size:16.667px;line-height:16.667px;color:#2b91af;">205</span>
<span class="t m" style="left:91.00px;top:211px;font-size:16.667px;line-height:16.667px;color:#0000ff;">End Sub</span>
<span class="t m" style="left:30.50px;top:236px;font-size:16.667px;line-height:16.667px;color:#2b91af;">206</span>
<span class="t m" style="left:30.50px;top:262px;font-size:16.667px;line-height:16.667px;color:#2b91af;">207</span>
<span class="t m" style="left:91.00px;top:262px;font-size:16.667px;line-height:16.667px;color:#0000ff;">Private Sub </span>
<span class="t m" style="left:211.02px;top:262px;font-size:16.667px;line-height:16.667px;color:#000;font-weight:bold;">GetArticlesSortedBy</span>
<span class="t m" style="left:401.05px;top:262px;font-size:16.667px;line-height:16.667px;color:#000;"> (col </span>
<span class="t m" style="left:461.06px;top:262px;font-size:16.667px;line-height:16.667px;color:#0000ff;">As </span>
<span class="t m" style="left:491.06px;top:262px;font-size:16.667px;line-height:16.667px;color:#008b8b;">String</span>
<span class="t m" style="left:551.07px;top:262px;font-size:16.667px;line-height:16.667px;color:#000;">)</span>
<span class="t m" style="left:30.50px;top:287px;font-size:16.667px;line-height:16.667px;color:#2b91af;">208</span>
<span class="t m" style="left:91.00px;top:287px;font-size:16.667px;line-height:16.667px;color:#3c3c3c;">    #region Documentation</span>
<span class="t m" style="left:30.50px;top:313px;font-size:16.667px;line-height:16.667px;color:#2b91af;">209</span>
<span class="t m" style="left:91.00px;top:313px;font-size:16.667px;line-height:16.667px;color:#008000;">    &#x27; #Version = v1</span>
<span class="t m" style="left:30.50px;top:338px;font-size:16.667px;line-height:16.667px;color:#2b91af;">210</span>
<span class="t m" style="left:91.00px;top:338px;font-size:16.667px;line-height:16.667px;color:#008000;">    &#x27; #Desc = List all articles sorted by id/title</span>
<span class="t m" style="left:30.50px;top:364px;font-size:16.667px;line-height:16.667px;color:#2b91af;">211</span>
<span class="t m" style="left:91.00px;top:364px;font-size:16.667px;line-height:16.667px;color:#008000;">    &#x27; #Elements = [&quot;sort&quot;, &quot;:col&quot;]</span>
<span class="t m" style="left:30.50px;top:389px;font-size:16.667px;line-height:16.667px;color:#2b91af;">212</span>
<span class="t m" style="left:91.00px;top:389px;font-size:16.667px;line-height:16.667px;color:#3c3c3c;">    #End region</span>
<span class="t m" style="left:30.50px;top:415px;font-size:16.667px;line-height:16.667px;color:#2b91af;">213</span>
<span class="t m" style="left:91.00px;top:415px;font-size:16.667px;line-height:16.667px;color:#8b00c8;">    Model</span>
<span class="t m" style="left:181.01px;top:415px;font-size:16.667px;line-height:16.667px;color:#000;">.ReadAndSortBy(col)</span>
<span class="t m" style="left:30.50px;top:440px;font-size:16.667px;line-height:16.667px;color:#2b91af;">214</span>
<span class="t m" style="left:91.00px;top:440px;font-size:16.667px;line-height:16.667px;color:#0000ff;">End Sub</span>
<span class="t m" style="left:30.50px;top:466px;font-size:16.667px;line-height:16.667px;color:#2b91af;">215</span>
<span class="t m" style="left:30.50px;top:491px;font-size:16.667px;line-height:16.667px;color:#2b91af;">216</span>
<span class="t m" style="left:91.00px;top:491px;font-size:16.667px;line-height:16.667px;color:#0000ff;">Private Sub </span>
<span class="t m" style="left:211.02px;top:491px;font-size:16.667px;line-height:16.667px;color:#000;font-weight:bold;">PostArticle</span>
<span class="t m" style="left:30.50px;top:517px;font-size:16.667px;line-height:16.667px;color:#2b91af;">217</span>
<span class="t m" style="left:91.00px;top:517px;font-size:16.667px;line-height:16.667px;color:#3c3c3c;">    #region Documentation</span>
<span class="t m" style="left:30.50px;top:542px;font-size:16.667px;line-height:16.667px;color:#2b91af;">218</span>
<span class="t m" style="left:91.00px;top:542px;font-size:16.667px;line-height:16.667px;color:#008000;">    &#x27; #Version = v1</span>
<span class="t m" style="left:30.50px;top:567px;font-size:16.667px;line-height:16.667px;color:#2b91af;">219</span>
<span class="t m" style="left:91.00px;top:567px;font-size:16.667px;line-height:16.667px;color:#008000;">    &#x27; #Desc = Add a new article</span>
<span class="t m" style="left:30.50px;top:593px;font-size:16.667px;line-height:16.667px;color:#2b91af;">220</span>
<span class="t m" style="left:91.00px;top:593px;font-size:16.667px;line-height:16.667px;color:#008000;">    &#x27; #Body = {&lt;br&gt;&amp;nbsp; &quot;title&quot;: &quot;title&quot;,&lt;br&gt;&amp;nbsp; &quot;contents&quot;: &quot;contents&quot;,&lt;br&gt;&amp;nbsp; &quot;category&quot;: 1&lt;br&gt;}</span>
<span class="t m" style="left:30.50px;top:618px;font-size:16.667px;line-height:16.667px;color:#2b91af;">221</span>
<span class="t m" style="left:91.00px;top:618px;font-size:16.667px;line-height:16.667px;color:#3c3c3c;">    #End region</span>
<span class="t m" style="left:30.50px;top:644px;font-size:16.667px;line-height:16.667px;color:#2b91af;">222</span>
<span class="t m" style="left:91.00px;top:644px;font-size:16.667px;line-height:16.667px;color:#8b00c8;">    Model</span>
<span class="t m" style="left:181.01px;top:644px;font-size:16.667px;line-height:16.667px;color:#000;">.CreateArticle</span>
<span class="t m" style="left:30.50px;top:669px;font-size:16.667px;line-height:16.667px;color:#2b91af;">223</span>
<span class="t m" style="left:91.00px;top:669px;font-size:16.667px;line-height:16.667px;color:#0000ff;">End Sub</span>
<span class="t m" style="left:30.50px;top:695px;font-size:16.667px;line-height:16.667px;color:#2b91af;">224</span>
</div>
<div style="left:168.4px;top:219.5px;width:10.5px;height:10.4px;background:#fff;border:1.6px solid #a9a9a9;"></div>
<div style="left:171.4px;top:224.0px;width:4.5px;height:1.6px;background:#333;"></div>
<div style="left:168.4px;top:244.98px;width:10.5px;height:10.4px;background:#fff;border:1.6px solid #a9a9a9;"></div>
<div style="left:171.4px;top:249.48px;width:4.5px;height:1.6px;background:#333;"></div>
<div style="left:173px;top:231.4px;width:1.4px;height:12.079999999999984px;background:#a9a9a9;"></div>
<div style="left:173px;top:256.88px;width:1.4px;height:184.16000000000003px;background:#a9a9a9;"></div>
<div style="left:173px;top:389.08px;width:8px;height:1.4px;background:#a9a9a9;"></div>
<div style="left:173px;top:439.64000000000004px;width:8px;height:1.4px;background:#a9a9a9;"></div>
<div style="left:168.4px;top:474.30000000000007px;width:10.5px;height:10.4px;background:#fff;border:1.6px solid #a9a9a9;"></div>
<div style="left:171.4px;top:478.80000000000007px;width:4.5px;height:1.6px;background:#333;"></div>
<div style="left:168.4px;top:499.7800000000001px;width:10.5px;height:10.4px;background:#fff;border:1.6px solid #a9a9a9;"></div>
<div style="left:171.4px;top:504.2800000000001px;width:4.5px;height:1.6px;background:#333;"></div>
<div style="left:173px;top:486.20000000000005px;width:1.4px;height:12.080000000000041px;background:#a9a9a9;"></div>
<div style="left:173px;top:511.68000000000006px;width:1.4px;height:158.67999999999995px;background:#a9a9a9;"></div>
<div style="left:173px;top:618.4px;width:8px;height:1.4px;background:#a9a9a9;"></div>
<div style="left:173px;top:668.96px;width:8px;height:1.4px;background:#a9a9a9;"></div>
<div style="left:168.4px;top:703.62px;width:10.5px;height:10.4px;background:#fff;border:1.6px solid #a9a9a9;"></div>
<div style="left:171.4px;top:708.12px;width:4.5px;height:1.6px;background:#333;"></div>
<div style="left:168.4px;top:729.1px;width:10.5px;height:10.4px;background:#fff;border:1.6px solid #a9a9a9;"></div>
<div style="left:171.4px;top:733.6px;width:4.5px;height:1.6px;background:#333;"></div>
<div style="left:173px;top:715.52px;width:1.4px;height:12.080000000000041px;background:#a9a9a9;"></div>
<div style="left:173px;top:741.0px;width:1.4px;height:158.67999999999995px;background:#a9a9a9;"></div>
<div style="left:173px;top:847.7199999999999px;width:8px;height:1.4px;background:#a9a9a9;"></div>
<div style="left:173px;top:898.28px;width:8px;height:1.4px;background:#a9a9a9;"></div>
<div style="left:998px;top:212px;width:26px;height:742px;background:#f2f2f2;"></div>
<div style="left:998px;top:212px;width:26px;height:10px;background:#fff;border:1.5px solid #bdbdbd;"></div>
<div style="left:1000px;top:222.5px;width:23px;height:23px;background:#fff;border:1.5px solid #bdbdbd;"></div>
<svg class="i" style="left:1006px;top:231px;" width="11" height="6" viewBox="0 0 11 6"><path d="M0 6H11L5.5 0Z" fill="#b8b8b8"/></svg>
<div style="left:1000px;top:683px;width:23px;height:60px;background:#fff;border:1.5px solid #b4b4b4;"></div>
<div style="left:1000px;top:904px;width:23px;height:24px;background:#fff;border:1.5px solid #bdbdbd;"></div>
<svg class="i" style="left:1006px;top:912.5px;" width="11" height="6" viewBox="0 0 11 6"><path d="M0 0H11L5.5 6Z" fill="#b0b0b0"/></svg>
<div style="left:61.5px;top:929px;width:936.5px;height:25px;background:#f2f2f2;"></div>
<div style="left:62px;top:929px;width:10px;height:25px;background:#fff;border:1.5px solid #bdbdbd;"></div>
<div style="left:72.5px;top:931px;width:23.5px;height:22.5px;background:#fff;border:1.5px solid #bdbdbd;"></div>
<svg class="i" style="left:81px;top:936.5px;" width="6" height="11" viewBox="0 0 6 11"><path d="M6 0V11L0 5.5Z" fill="#b0b0b0"/></svg>
<div style="left:98.5px;top:931px;width:259.5px;height:22.5px;background:#fff;border:1.5px solid #b4b4b4;"></div>
<div style="left:974px;top:931px;width:24px;height:22.5px;background:#fff;border:1.5px solid #bdbdbd;"></div>
<svg class="i" style="left:983px;top:936.5px;" width="6" height="11" viewBox="0 0 6 11"><path d="M0 0V11L6 5.5Z" fill="#b0b0b0"/></svg>
<svg class="i" style="left:70px;top:186px;" width="15" height="16" viewBox="0 0 15 16"><path d="M7.2 1L13.4 4.4V11.4L7.2 14.9L1 11.4V4.4Z M1.3 4.6L7.2 8L13.1 4.6M7.2 8V14.6" fill="none" stroke="#8044a8" stroke-width="1.8" stroke-linejoin="round"/></svg>
</main>
<aside id="modules" class="sec">
<div style="left:1046px;top:140px;width:838.5px;height:783px;background:#fafafa;border:2px solid #d2d2d2;border-bottom:none;"></div>
<div style="left:1048px;top:141px;width:834.3px;height:35.8px;background:#80397c;"></div>
<span class="t" style="left:1055.00px;top:153px;font-size:17.5px;line-height:17.5px;color:#fff;letter-spacing:0.693px;">Modules</span>
<svg class="i" style="left:1137.8px;top:156.9px;" width="664" height="8" viewBox="0 0 664 8"><defs><pattern id="grip" width="6" height="6" patternUnits="userSpaceOnUse"><rect x="0" y="0" width="2" height="2" fill="#c9a6c9"/><rect x="3" y="3" width="2" height="2" fill="#c9a6c9"/></pattern></defs><rect width="664" height="8" fill="url(#grip)"/></svg>
<svg class="i" style="left:1815px;top:160px;" width="12" height="6.2" viewBox="0 0 12 6.2"><path d="M0 0H12L6 6.2Z" fill="#d8b8d8"/></svg>
<svg class="i" style="left:1839px;top:152px;" width="11" height="16" viewBox="0 0 11 16"><path d="M2.2 0.8H8M2.8 0.8V8.6M7.6 0.8V8.6M0.2 9H10M5.2 9.4V15.2" stroke="#d8b8d8" stroke-width="1.7" fill="none"/><rect x="5.6" y="1.5" width="2" height="7" fill="#d8b8d8"/></svg>
<svg class="i" style="left:1862.8px;top:154px;" width="12.5" height="12" viewBox="0 0 12.5 12"><path d="M0.5 0.3L12 11.7M12 0.3L0.5 11.7" stroke="#dcc0dc" stroke-width="1.8" fill="none"/></svg>
<div style="left:1063px;top:185px;width:805px;height:33.5px;background:#fff;border:1.5px solid #d4dcea;border-top:1.5px solid #a4a8b0;"></div>
<span class="t" style="left:1070.50px;top:196px;font-size:17.5px;line-height:17.5px;color:#979797;letter-spacing:0.137px;font-style:italic;">Find Sub / Module / Line number (Ctrl+E)</span>
<div style="left:1048px;top:226px;width:836px;height:697px;background:#fafafa;border:2.5px solid #b2b2b2;"></div>
<span class="t" style="left:1112.00px;top:238px;font-size:17.5px;line-height:17.5px;color:#000;letter-spacing:1.021px;">App</span>
<span class="t" style="left:1142.00px;top:271px;font-size:17.5px;line-height:17.5px;color:#000;letter-spacing:-0.734px;">Classes</span>
<span class="t" style="left:1142.00px;top:304px;font-size:17.5px;line-height:17.5px;color:#000;letter-spacing:-0.220px;">Filters</span>
<span class="t" style="left:1142.00px;top:337px;font-size:17.5px;line-height:17.5px;color:#000;letter-spacing:-0.004px;">Handlers</span>
<span class="t" style="left:1142.00px;top:370px;font-size:17.5px;line-height:17.5px;color:#000;letter-spacing:0.317px;">Main</span>
<span class="t" style="left:1112.00px;top:403px;font-size:17.5px;line-height:17.5px;color:#000;letter-spacing:0.032px;font-weight:bold;">Controllers</span>
<div style="left:1050px;top:426px;width:831.5px;height:32.6px;background:#c3c3c3;"></div>
<span class="t" style="left:1142.00px;top:436px;font-size:17.5px;line-height:17.5px;color:#000;letter-spacing:0.138px;font-weight:bold;">ArticlesController</span>
<span class="t" style="left:1142.00px;top:469px;font-size:17.5px;line-height:17.5px;color:#000;letter-spacing:0.105px;">CategoriesController</span>
<span class="t" style="left:1142.00px;top:502px;font-size:17.5px;line-height:17.5px;color:#000;letter-spacing:0.145px;">StaffsController</span>
<span class="t" style="left:1112.00px;top:535px;font-size:17.5px;line-height:17.5px;color:#000;letter-spacing:0.481px;">Models</span>
<div style="left:1050px;top:558px;width:831.5px;height:32.6px;background:#c3c3c3;"></div>
<span class="t" style="left:1142.00px;top:568px;font-size:17.5px;line-height:17.5px;color:#000;letter-spacing:0.259px;">ArticlesModel</span>
<span class="t" style="left:1142.00px;top:601px;font-size:17.5px;line-height:17.5px;color:#000;letter-spacing:0.194px;">CategoriesModel</span>
<span class="t" style="left:1142.00px;top:634px;font-size:17.5px;line-height:17.5px;color:#000;letter-spacing:0.283px;">StaffsModel</span>
<span class="t" style="left:1142.00px;top:667px;font-size:17.5px;line-height:17.5px;color:#000;letter-spacing:0.199px;">UserModel</span>
<span class="t" style="left:1112.00px;top:700px;font-size:17.5px;line-height:17.5px;color:#000;letter-spacing:-0.233px;">Views</span>
<span class="t" style="left:1142.00px;top:733px;font-size:17.5px;line-height:17.5px;color:#000;letter-spacing:-0.013px;">Layouts</span>
<span class="t" style="left:1142.00px;top:766px;font-size:17.5px;line-height:17.5px;color:#000;letter-spacing:-0.704px;">Pages</span>
<div style="left:1050px;top:789px;width:831.5px;height:32.6px;background:#c3c3c3;"></div>
<span class="t" style="left:1172.00px;top:799px;font-size:17.5px;line-height:17.5px;color:#000;letter-spacing:-0.057px;">ArticlesView</span>
<span class="t" style="left:1172.00px;top:832px;font-size:17.5px;line-height:17.5px;color:#000;letter-spacing:-0.060px;">CategoriesView</span>
<span class="t" style="left:1172.00px;top:865px;font-size:17.5px;line-height:17.5px;color:#000;letter-spacing:-0.034px;">StaffsView</span>
<div style="left:1047.5px;top:923px;width:116px;height:32.5px;background:#fff;border-bottom:1px solid #d4d4d4;border-right:1px solid #e4e4e4;"></div>
<span class="t" style="left:1088.00px;top:933px;font-size:17.5px;line-height:17.5px;color:#8b3a8b;letter-spacing:0.550px;">Modules</span>
<span class="t" style="left:1205.70px;top:933px;font-size:17.5px;line-height:17.5px;color:#444;letter-spacing:-0.259px;">Files Mana...</span>
<span class="t" style="left:1353.00px;top:933px;font-size:17.5px;line-height:17.5px;color:#444;letter-spacing:-0.058px;">Libraries Ma...</span>
<span class="t" style="left:1513.30px;top:933px;font-size:17.5px;line-height:17.5px;color:#444;letter-spacing:0.438px;">Logs</span>
<span class="t" style="left:1601.70px;top:933px;font-size:17.5px;line-height:17.5px;color:#444;letter-spacing:-0.252px;">Quick Sea...</span>
<span class="t" style="left:1745.70px;top:933px;font-size:17.5px;line-height:17.5px;color:#444;letter-spacing:-0.115px;">Find All Refere...</span>
<svg class="i" style="left:1060.9px;top:237.7px;" width="10" height="10" viewBox="0 0 10 10"><path d="M9.8 0V9.8H0Z" fill="#262626"/></svg>
<svg class="i" style="left:1084.3px;top:236.1px;" width="22" height="17" viewBox="0 0 22 17"><path d="M2.3 9V3.3H7.6L9.2 0.8H20.5V15.6H18.5" fill="#fdfbf7" stroke="#e8c488" stroke-width="1.5"/><path d="M0.3 9.1H14.2L18.6 16.4H3.2L2.2 11.5H1Z" fill="#e8c488"/></svg>
<svg class="i" style="left:1093.1px;top:269.5px;" width="8" height="15" viewBox="0 0 8 15"><path d="M0.8 1.3L6.6 7.2L0.8 13.1Z" fill="#fff" stroke="#8c8c8c" stroke-width="1.5" stroke-linejoin="miter"/></svg>
<svg class="i" style="left:1116.0px;top:269px;" width="20" height="17" viewBox="0 0 20 17"><path d="M0 3H6.2L7.6 0H19.4V16.4H0Z" fill="#dcb67a"/><rect x="9" y="1.5" width="9" height="1.1" fill="#fbf3e4"/></svg>
<svg class="i" style="left:1093.1px;top:302.5px;" width="8" height="15" viewBox="0 0 8 15"><path d="M0.8 1.3L6.6 7.2L0.8 13.1Z" fill="#fff" stroke="#8c8c8c" stroke-width="1.5" stroke-linejoin="miter"/></svg>
<svg class="i" style="left:1116.0px;top:302px;" width="20" height="17" viewBox="0 0 20 17"><path d="M0 3H6.2L7.6 0H19.4V16.4H0Z" fill="#dcb67a"/><rect x="9" y="1.5" width="9" height="1.1" fill="#fbf3e4"/></svg>
<svg class="i" style="left:1093.1px;top:335.5px;" width="8" height="15" viewBox="0 0 8 15"><path d="M0.8 1.3L6.6 7.2L0.8 13.1Z" fill="#fff" stroke="#8c8c8c" stroke-width="1.5" stroke-linejoin="miter"/></svg>
<svg class="i" style="left:1116.0px;top:335px;" width="20" height="17" viewBox="0 0 20 17"><path d="M0 3H6.2L7.6 0H19.4V16.4H0Z" fill="#dcb67a"/><rect x="9" y="1.5" width="9" height="1.1" fill="#fbf3e4"/></svg>
<svg class="i" style="left:1093.1px;top:368.5px;" width="8" height="15" viewBox="0 0 8 15"><path d="M0.8 1.3L6.6 7.2L0.8 13.1Z" fill="#fff" stroke="#8c8c8c" stroke-width="1.5" stroke-linejoin="miter"/></svg>
<svg class="i" style="left:1114.3999999999999px;top:368.3px;" width="22" height="18" viewBox="0 0 22 18"><rect x="0.85" y="0.85" width="19.4" height="15.8" rx="1.2" fill="#ececec" stroke="#444" stroke-width="1.7"/><rect x="1.7" y="1.7" width="17.7" height="2.3" fill="#fff"/><path d="M1 4.8H20" stroke="#444" stroke-width="1.5"/><path d="M3.7 8.2H10.1M12.3 8.2H15.2M3.7 11H10.1M12.3 11H16.6M3.7 14H5.6M7.6 14H17.8" stroke="#444" stroke-width="1.5"/></svg>
<svg class="i" style="left:1060.9px;top:402.7px;" width="10" height="10" viewBox="0 0 10 10"><path d="M9.8 0V9.8H0Z" fill="#262626"/></svg>
<svg class="i" style="left:1084.3px;top:401.1px;" width="22" height="17" viewBox="0 0 22 17"><path d="M2.3 9V3.3H7.6L9.2 0.8H20.5V15.6H18.5" fill="#fdfbf7" stroke="#e8c488" stroke-width="1.5"/><path d="M0.3 9.1H14.2L18.6 16.4H3.2L2.2 11.5H1Z" fill="#e8c488"/></svg>
<svg class="i" style="left:1093.1px;top:434.5px;" width="8" height="15" viewBox="0 0 8 15"><path d="M0.8 1.3L6.6 7.2L0.8 13.1Z" fill="#fff" stroke="#8c8c8c" stroke-width="1.5" stroke-linejoin="miter"/></svg>
<svg class="i" style="left:1113.1999999999998px;top:432.3px;" width="22" height="24" viewBox="0 0 22 24"><path d="M5.1 0.8H15.3L20 5.6V18.9H5.1Z" fill="#cfcfcf"/><path d="M5.1 9.6V0.8H15.3L20 5.6V18.9H12.2" fill="none" stroke="#5e5e5e" stroke-width="1.6"/><path d="M15.3 0.8V5.6H20Z" fill="#5e5e5e"/><path d="M1.5 14.2H10M5.3 14.2V20.4H9" fill="none" stroke="#1a6fd0" stroke-width="1.9"/><path d="M0 14.2L3.8 10.9V17.5Z M11.6 14.2L8.6 11.9V16.5Z M11.6 20.4L8.3 17.9V22.9Z" fill="#1a6fd0"/></svg>
<svg class="i" style="left:1093.1px;top:467.5px;" width="8" height="15" viewBox="0 0 8 15"><path d="M0.8 1.3L6.6 7.2L0.8 13.1Z" fill="#fff" stroke="#8c8c8c" stroke-width="1.5" stroke-linejoin="miter"/></svg>
<svg class="i" style="left:1113.1999999999998px;top:465.3px;" width="22" height="24" viewBox="0 0 22 24"><path d="M5.1 0.8H15.3L20 5.6V18.9H5.1Z" fill="#ebebeb"/><path d="M5.1 9.6V0.8H15.3L20 5.6V18.9H12.2" fill="none" stroke="#6e6e6e" stroke-width="1.6"/><path d="M15.3 0.8V5.6H20Z" fill="#6e6e6e"/><path d="M1.5 14.2H10M5.3 14.2V20.4H9" fill="none" stroke="#1a6fd0" stroke-width="1.9"/><path d="M0 14.2L3.8 10.9V17.5Z M11.6 14.2L8.6 11.9V16.5Z M11.6 20.4L8.3 17.9V22.9Z" fill="#1a6fd0"/></svg>
<svg class="i" style="left:1093.1px;top:500.5px;" width="8" height="15" viewBox="0 0 8 15"><path d="M0.8 1.3L6.6 7.2L0.8 13.1Z" fill="#fff" stroke="#8c8c8c" stroke-width="1.5" stroke-linejoin="miter"/></svg>
<svg class="i" style="left:1113.1999999999998px;top:498.3px;" width="22" height="24" viewBox="0 0 22 24"><path d="M5.1 0.8H15.3L20 5.6V18.9H5.1Z" fill="#ebebeb"/><path d="M5.1 9.6V0.8H15.3L20 5.6V18.9H12.2" fill="none" stroke="#6e6e6e" stroke-width="1.6"/><path d="M15.3 0.8V5.6H20Z" fill="#6e6e6e"/><path d="M1.5 14.2H10M5.3 14.2V20.4H9" fill="none" stroke="#1a6fd0" stroke-width="1.9"/><path d="M0 14.2L3.8 10.9V17.5Z M11.6 14.2L8.6 11.9V16.5Z M11.6 20.4L8.3 17.9V22.9Z" fill="#1a6fd0"/></svg>
<svg class="i" style="left:1060.9px;top:534.7px;" width="10" height="10" viewBox="0 0 10 10"><path d="M9.8 0V9.8H0Z" fill="#262626"/></svg>
<svg class="i" style="left:1084.3px;top:533.1px;" width="22" height="17" viewBox="0 0 22 17"><path d="M2.3 9V3.3H7.6L9.2 0.8H20.5V15.6H18.5" fill="#fdfbf7" stroke="#e8c488" stroke-width="1.5"/><path d="M0.3 9.1H14.2L18.6 16.4H3.2L2.2 11.5H1Z" fill="#e8c488"/></svg>
<svg class="i" style="left:1093.1px;top:566.5px;" width="8" height="15" viewBox="0 0 8 15"><path d="M0.8 1.3L6.6 7.2L0.8 13.1Z" fill="#fff" stroke="#8c8c8c" stroke-width="1.5" stroke-linejoin="miter"/></svg>
<svg class="i" style="left:1113.1999999999998px;top:564.3px;" width="22" height="24" viewBox="0 0 22 24"><path d="M5.1 0.8H15.3L20 5.6V18.9H5.1Z" fill="#cfcfcf"/><path d="M5.1 9.6V0.8H15.3L20 5.6V18.9H12.2" fill="none" stroke="#5e5e5e" stroke-width="1.6"/><path d="M15.3 0.8V5.6H20Z" fill="#5e5e5e"/><path d="M1.5 14.2H10M5.3 14.2V20.4H9" fill="none" stroke="#1a6fd0" stroke-width="1.9"/><path d="M0 14.2L3.8 10.9V17.5Z M11.6 14.2L8.6 11.9V16.5Z M11.6 20.4L8.3 17.9V22.9Z" fill="#1a6fd0"/></svg>
<svg class="i" style="left:1093.1px;top:599.5px;" width="8" height="15" viewBox="0 0 8 15"><path d="M0.8 1.3L6.6 7.2L0.8 13.1Z" fill="#fff" stroke="#8c8c8c" stroke-width="1.5" stroke-linejoin="miter"/></svg>
<svg class="i" style="left:1113.1999999999998px;top:597.3px;" width="22" height="24" viewBox="0 0 22 24"><path d="M5.1 0.8H15.3L20 5.6V18.9H5.1Z" fill="#ebebeb"/><path d="M5.1 9.6V0.8H15.3L20 5.6V18.9H12.2" fill="none" stroke="#6e6e6e" stroke-width="1.6"/><path d="M15.3 0.8V5.6H20Z" fill="#6e6e6e"/><path d="M1.5 14.2H10M5.3 14.2V20.4H9" fill="none" stroke="#1a6fd0" stroke-width="1.9"/><path d="M0 14.2L3.8 10.9V17.5Z M11.6 14.2L8.6 11.9V16.5Z M11.6 20.4L8.3 17.9V22.9Z" fill="#1a6fd0"/></svg>
<svg class="i" style="left:1093.1px;top:632.5px;" width="8" height="15" viewBox="0 0 8 15"><path d="M0.8 1.3L6.6 7.2L0.8 13.1Z" fill="#fff" stroke="#8c8c8c" stroke-width="1.5" stroke-linejoin="miter"/></svg>
<svg class="i" style="left:1113.1999999999998px;top:630.3px;" width="22" height="24" viewBox="0 0 22 24"><path d="M5.1 0.8H15.3L20 5.6V18.9H5.1Z" fill="#ebebeb"/><path d="M5.1 9.6V0.8H15.3L20 5.6V18.9H12.2" fill="none" stroke="#6e6e6e" stroke-width="1.6"/><path d="M15.3 0.8V5.6H20Z" fill="#6e6e6e"/><path d="M1.5 14.2H10M5.3 14.2V20.4H9" fill="none" stroke="#1a6fd0" stroke-width="1.9"/><path d="M0 14.2L3.8 10.9V17.5Z M11.6 14.2L8.6 11.9V16.5Z M11.6 20.4L8.3 17.9V22.9Z" fill="#1a6fd0"/></svg>
<svg class="i" style="left:1093.1px;top:665.5px;" width="8" height="15" viewBox="0 0 8 15"><path d="M0.8 1.3L6.6 7.2L0.8 13.1Z" fill="#fff" stroke="#8c8c8c" stroke-width="1.5" stroke-linejoin="miter"/></svg>
<svg class="i" style="left:1113.1999999999998px;top:663.3px;" width="22" height="24" viewBox="0 0 22 24"><path d="M5.1 0.8H15.3L20 5.6V18.9H5.1Z" fill="#ebebeb"/><path d="M5.1 9.6V0.8H15.3L20 5.6V18.9H12.2" fill="none" stroke="#6e6e6e" stroke-width="1.6"/><path d="M15.3 0.8V5.6H20Z" fill="#6e6e6e"/><path d="M1.5 14.2H10M5.3 14.2V20.4H9" fill="none" stroke="#1a6fd0" stroke-width="1.9"/><path d="M0 14.2L3.8 10.9V17.5Z M11.6 14.2L8.6 11.9V16.5Z M11.6 20.4L8.3 17.9V22.9Z" fill="#1a6fd0"/></svg>
<svg class="i" style="left:1060.9px;top:699.7px;" width="10" height="10" viewBox="0 0 10 10"><path d="M9.8 0V9.8H0Z" fill="#262626"/></svg>
<svg class="i" style="left:1084.3px;top:698.1px;" width="22" height="17" viewBox="0 0 22 17"><path d="M2.3 9V3.3H7.6L9.2 0.8H20.5V15.6H18.5" fill="#fdfbf7" stroke="#e8c488" stroke-width="1.5"/><path d="M0.3 9.1H14.2L18.6 16.4H3.2L2.2 11.5H1Z" fill="#e8c488"/></svg>
<svg class="i" style="left:1093.1px;top:731.5px;" width="8" height="15" viewBox="0 0 8 15"><path d="M0.8 1.3L6.6 7.2L0.8 13.1Z" fill="#fff" stroke="#8c8c8c" stroke-width="1.5" stroke-linejoin="miter"/></svg>
<svg class="i" style="left:1116.0px;top:731px;" width="20" height="17" viewBox="0 0 20 17"><path d="M0 3H6.2L7.6 0H19.4V16.4H0Z" fill="#dcb67a"/><rect x="9" y="1.5" width="9" height="1.1" fill="#fbf3e4"/></svg>
<svg class="i" style="left:1090.8999999999999px;top:765.7px;" width="10" height="10" viewBox="0 0 10 10"><path d="M9.8 0V9.8H0Z" fill="#262626"/></svg>
<svg class="i" style="left:1114.3px;top:764.1px;" width="22" height="17" viewBox="0 0 22 17"><path d="M2.3 9V3.3H7.6L9.2 0.8H20.5V15.6H18.5" fill="#fdfbf7" stroke="#e8c488" stroke-width="1.5"/><path d="M0.3 9.1H14.2L18.6 16.4H3.2L2.2 11.5H1Z" fill="#e8c488"/></svg>
<svg class="i" style="left:1123.1px;top:797.5px;" width="8" height="15" viewBox="0 0 8 15"><path d="M0.8 1.3L6.6 7.2L0.8 13.1Z" fill="#fff" stroke="#8c8c8c" stroke-width="1.5" stroke-linejoin="miter"/></svg>
<svg class="i" style="left:1143.1999999999998px;top:795.3px;" width="22" height="24" viewBox="0 0 22 24"><path d="M5.1 0.8H15.3L20 5.6V18.9H5.1Z" fill="#cfcfcf"/><path d="M5.1 9.6V0.8H15.3L20 5.6V18.9H12.2" fill="none" stroke="#5e5e5e" stroke-width="1.6"/><path d="M15.3 0.8V5.6H20Z" fill="#5e5e5e"/><path d="M1.5 14.2H10M5.3 14.2V20.4H9" fill="none" stroke="#1a6fd0" stroke-width="1.9"/><path d="M0 14.2L3.8 10.9V17.5Z M11.6 14.2L8.6 11.9V16.5Z M11.6 20.4L8.3 17.9V22.9Z" fill="#1a6fd0"/></svg>
<svg class="i" style="left:1123.1px;top:830.5px;" width="8" height="15" viewBox="0 0 8 15"><path d="M0.8 1.3L6.6 7.2L0.8 13.1Z" fill="#fff" stroke="#8c8c8c" stroke-width="1.5" stroke-linejoin="miter"/></svg>
<svg class="i" style="left:1143.1999999999998px;top:828.3px;" width="22" height="24" viewBox="0 0 22 24"><path d="M5.1 0.8H15.3L20 5.6V18.9H5.1Z" fill="#ebebeb"/><path d="M5.1 9.6V0.8H15.3L20 5.6V18.9H12.2" fill="none" stroke="#6e6e6e" stroke-width="1.6"/><path d="M15.3 0.8V5.6H20Z" fill="#6e6e6e"/><path d="M1.5 14.2H10M5.3 14.2V20.4H9" fill="none" stroke="#1a6fd0" stroke-width="1.9"/><path d="M0 14.2L3.8 10.9V17.5Z M11.6 14.2L8.6 11.9V16.5Z M11.6 20.4L8.3 17.9V22.9Z" fill="#1a6fd0"/></svg>
<svg class="i" style="left:1123.1px;top:863.5px;" width="8" height="15" viewBox="0 0 8 15"><path d="M0.8 1.3L6.6 7.2L0.8 13.1Z" fill="#fff" stroke="#8c8c8c" stroke-width="1.5" stroke-linejoin="miter"/></svg>
<svg class="i" style="left:1143.1999999999998px;top:861.3px;" width="22" height="24" viewBox="0 0 22 24"><path d="M5.1 0.8H15.3L20 5.6V18.9H5.1Z" fill="#ebebeb"/><path d="M5.1 9.6V0.8H15.3L20 5.6V18.9H12.2" fill="none" stroke="#6e6e6e" stroke-width="1.6"/><path d="M15.3 0.8V5.6H20Z" fill="#6e6e6e"/><path d="M1.5 14.2H10M5.3 14.2V20.4H9" fill="none" stroke="#1a6fd0" stroke-width="1.9"/><path d="M0 14.2L3.8 10.9V17.5Z M11.6 14.2L8.6 11.9V16.5Z M11.6 20.4L8.3 17.9V22.9Z" fill="#1a6fd0"/></svg>
<svg class="i" style="left:1842px;top:194.5px;" width="18.0" height="17.0" viewBox="0 0 18 17"><circle cx="11.3" cy="6.4" r="5.3" fill="#fff" stroke="#3a80c8" stroke-width="2.3"/><path d="M7.4 10.2L1.8 15.8" stroke="#1c3c78" stroke-width="2.6" stroke-linecap="round"/></svg>
<svg class="i" style="left:1060.3px;top:931.7px;" width="16" height="15" viewBox="0 0 16 15"><path d="M0 0H6.5V5.7H0Z M9 0H15.5V5.7H9Z M0 8.3H15.5V15H0Z" fill="#3c3c3c"/></svg>
<svg class="i" style="left:1176.7px;top:930.3px;" width="20" height="17" viewBox="0 0 20 17"><path d="M0 3H6.4L7.8 0H20V16.4H0Z" fill="#dcb67a"/><rect x="9.5" y="1.5" width="9" height="1.1" fill="#fbf3e4"/></svg>
<svg class="i" style="left:1323.3px;top:930.3px;" width="22" height="16" viewBox="0 0 22 16"><path d="M0.8 0.8H10.7V14.2L9 13H0.8Z M10.7 0.8H20.6V13H12.4L10.7 14.2" fill="none" stroke="#444" stroke-width="1.6"/><path d="M9.5 14.6H12" stroke="#444" stroke-width="1.6"/></svg>
<svg class="i" style="left:1483.3px;top:928.8px;" width="22" height="21" viewBox="0 0 22 21"><path d="M0 1.2H21.4M0 7H14.7M0 12.9H18.4M0 19H10" stroke="#3c3c3c" stroke-width="2.4"/></svg>
<svg class="i" style="left:1573px;top:929px;" width="20" height="19" viewBox="0 0 20 19"><circle cx="12.8" cy="6.8" r="4.7" fill="none" stroke="#444" stroke-width="2.6"/><path d="M9 10.6L1.8 17.4" stroke="#444" stroke-width="3.2" stroke-linecap="round"/></svg>
<svg class="i" style="left:1716.5px;top:931.5px;" width="18" height="16" viewBox="0 0 18 16"><path d="M3.5 0.2H11V3.5H3.5Z M12.5 0.2H17.5V6.8H12.5Z" fill="#3c3c3c"/><circle cx="7.8" cy="9.3" r="2.9" fill="none" stroke="#3a78c8" stroke-width="1.7"/><path d="M5.6 11.5L0.8 15.2" stroke="#3a78c8" stroke-width="2" stroke-linecap="round"/></svg>
</aside>
<footer id="statusbar" class="sec">
<div style="left:49px;top:966px;width:1846px;height:1.6px;background:#c6c6c6;"></div>
<div style="left:49px;top:967.6px;width:1846px;height:36.4px;background:#f9f9f9;"></div>
<span class="t" style="left:63.00px;top:979px;font-size:17.5px;line-height:17.5px;color:#6a6a6a;letter-spacing:-0.034px;">B4J-Bridge: Disconnected</span>
<span class="t" style="left:294.00px;top:979px;font-size:17.5px;line-height:17.5px;color:#6a6a6a;letter-spacing:0.515px;">12/15/2023 5:25:11 AM</span>
<span class="t" style="left:498.30px;top:979px;font-size:17.5px;line-height:17.5px;color:#6a6a6a;letter-spacing:0.099px;">Backup completed successfully.</span>
</footer>
<footer id="taskbar" class="sec">
<div style="left:0px;top:1008px;width:1920px;height:72px;background:linear-gradient(90deg,#dedcee 0px,#e2def0 250px,#e8dfee 500px,#eee0ea 760px,#f1e2e8 950px,#f0e2e8 1100px,#ebe0ec 1350px,#e3e0f0 1600px,#e0e0f2 1920px);"></div>
<svg class="i" style="left:0;top:1008px" width="1920" height="72" viewBox="0 1008 1920 72">
<defs>
<linearGradient id="gw" x1="0" y1="0" x2="1" y2="1"><stop offset="0" stop-color="#50c8fa"/><stop offset="0.55" stop-color="#1a92e2"/><stop offset="1" stop-color="#0876d2"/></linearGradient>
<linearGradient id="gcp1" x1="0" y1="0" x2="0" y2="1"><stop offset="0" stop-color="#1aa0e8"/><stop offset="0.45" stop-color="#40c070"/><stop offset="0.8" stop-color="#f0d020"/><stop offset="1" stop-color="#f08030"/></linearGradient>
<linearGradient id="gcp2" x1="0" y1="0" x2="1" y2="1"><stop offset="0" stop-color="#9a60f8"/><stop offset="0.5" stop-color="#e860b0"/><stop offset="1" stop-color="#f87050"/></linearGradient>
<linearGradient id="gcl" x1="0" y1="0" x2="0" y2="1"><stop offset="0" stop-color="#a8c4f0"/><stop offset="0.5" stop-color="#cfe0f6"/><stop offset="1" stop-color="#8fb0ea"/></linearGradient>
<linearGradient id="gfo" x1="0" y1="0" x2="1" y2="1"><stop offset="0" stop-color="#ffd860"/><stop offset="1" stop-color="#f6b818"/></linearGradient>
<linearGradient id="ged1" x1="0" y1="0" x2="1" y2="0.3"><stop offset="0" stop-color="#1c9ae8"/><stop offset="0.5" stop-color="#30c0d0"/><stop offset="1" stop-color="#6ae060"/></linearGradient>
<linearGradient id="ged2" x1="0" y1="0" x2="1" y2="1"><stop offset="0" stop-color="#1a8ae0"/><stop offset="1" stop-color="#0c4a9c"/></linearGradient>
<radialGradient id="gff" cx="0.6" cy="0.2" r="0.9"><stop offset="0" stop-color="#fff040"/><stop offset="0.35" stop-color="#ffb020"/><stop offset="0.7" stop-color="#ff5a28"/><stop offset="1" stop-color="#e81a80"/></radialGradient>
<radialGradient id="gfg" cx="0.5" cy="0.3" r="0.8"><stop offset="0" stop-color="#a048ff"/><stop offset="1" stop-color="#5a38c8"/></radialGradient>
<linearGradient id="gvs" x1="0" y1="0" x2="0" y2="1"><stop offset="0" stop-color="#30b0f8"/><stop offset="1" stop-color="#1a98ec"/></linearGradient>
</defs>
<path d="M33 1027.4H47.2V1043.9H30.9V1029.5Q30.9 1027.4 33 1027.4Z M49 1027.4H63.6Q65.7 1027.4 65.7 1029.5V1043.9H49Z M30.9 1045.7H47.2V1061.7H33Q30.9 1061.7 30.9 1059.6Z M49 1045.7H65.7V1059.6Q65.7 1061.7 63.6 1061.7H49Z" fill="url(#gw)"/>
<circle cx="114" cy="1041.2" r="12.2" fill="none" stroke="#262626" stroke-width="3.4"/><path d="M123 1050.4L130.2 1059" stroke="#262626" stroke-width="3.6" stroke-linecap="round"/>
<path d="M172 1030Q174 1028.4 178 1028.4H188Q193 1028.4 193.5 1033L184 1052Q182 1056 177 1056H170Q164 1055 165.5 1048Z" fill="url(#gcp1)"/>
<path d="M186 1028.4Q192 1028 194 1034L192 1040L184 1038Z" fill="#1a58d0"/>
<path d="M184 1036Q186 1034 190 1034H195Q200.5 1034.5 199.5 1041L195 1054Q193 1058 188 1058H180Q178 1058 179 1055Z" fill="url(#gcp2)"/>
<path d="M181 1051L185.5 1038H188L183.5 1052Z" fill="#f4f4fa"/>
<rect x="173" y="1052" width="26.7" height="9.6" rx="2.4" fill="#ffc800"/>
</svg>
<span class="t" style="left:176.40px;top:1053px;font-size:8.4px;line-height:8.4px;color:#111;letter-spacing:1.543px;font-weight:bold;">PRE</span>
<svg class="i" style="left:0;top:1008px" width="1920" height="72" viewBox="0 1008 1920 72">
<path d="M230.4 1037.5Q236 1040 241 1035Q243 1040 240 1044.7Q234 1044.5 230.4 1037.5Z" fill="#f49820"/>
<path d="M236 1060.5Q229.9 1060 229.9 1054Q230 1048.5 237 1047.5Q240 1040 248 1041Q253 1039.7 256.5 1045Q266 1045 266 1053Q266 1060 259 1060.5Z" fill="url(#gcl)"/>
<rect x="242.3" y="1018.9" width="35.1" height="23.3" rx="11.6" fill="#f8f8fa"/>
<path d="M296 1030Q296 1027.8 298 1027.8H307.5Q309 1027.8 310 1029L312 1031.3H330Q332 1031.3 332 1033.3V1036H296Z" fill="#e2a208"/>
<path d="M296 1034.5H307L311 1031.3H330Q332 1031.3 332 1033.3V1058Q332 1060 330 1060H298Q296 1060 296 1058Z" fill="url(#gfo)"/>
<path d="M302 1060V1053Q302 1050 305 1050H323Q326 1050 326 1053V1060Z" fill="#1478d0"/><rect x="307" y="1054.4" width="14" height="1.5" fill="#0c58a8"/>
<rect x="310" y="1068.3" width="9" height="4.6" rx="2.3" fill="#88868e"/>
<circle cx="380" cy="1044" r="18.1" fill="url(#ged1)"/>
<path d="M362 1046Q361 1034 371 1033Q381 1032 384.5 1040Q376 1038 373.5 1045Q372 1055 384 1059Q391 1060 396.5 1053Q392 1062.5 380 1062.1Q364 1061 362 1046Z" fill="url(#ged2)"/>
<path d="M384.5 1040Q379 1040 377.5 1045.5Q377.5 1053 386 1054.5Q392 1055 396.5 1051.5L396.5 1053Q391 1060 384 1059Q372 1055 373.5 1045Q376 1038 384.5 1040Z" fill="#0c3e8c"/>
<path d="M384.5 1040.5Q389 1042 386.5 1046.5Q385 1049 389 1049.5Q396 1049 398 1044L398.1 1047Q397 1051 394 1053Q389 1055 384 1053.5Q378 1051 378.5 1045Q380 1040 384.5 1040.5Z" fill="#e8e0ee"/>
<path d="M446 1060.2Q430 1060 429 1045Q429 1036 434 1031Q434.5 1034 436.5 1035Q438 1030 443 1029Q449 1024 452 1025.8Q456 1028 457 1033Q461 1034 462.8 1043Q463 1059 446 1060.2Z" fill="url(#gff)"/>
<circle cx="445.7" cy="1043.2" r="7.2" fill="url(#gfg)"/>
<path d="M434 1041Q438 1036 445 1038.5Q450 1037 452 1040Q447 1040 445 1043Q441 1045 438.5 1042.5Q436 1041 434 1041Z" fill="#ff9a20"/>
<circle cx="512" cy="1043.7" r="18" fill="#e8402c"/>
<path d="M512 1043.7L496.4 1034.7A18 18 0 0 0 503 1059.3Z" fill="#2ea04a"/>
<path d="M512 1043.7L503 1059.3A18 18 0 0 0 512 1061.7L521 1046Z" fill="#2ea04a"/>
<path d="M512 1043.7H530A18 18 0 0 1 512 1061.7L504.5 1058Z" fill="#fbc116"/>
<path d="M496.4 1034.7A18 18 0 0 1 527.6 1034.7H512Z" fill="#e8402c"/>
<path d="M496.4 1034.7L505 1049.5L512 1043.7Z" fill="#2ea04a"/>
<circle cx="512" cy="1043.7" r="9.2" fill="#fff"/><circle cx="512" cy="1043.7" r="7.2" fill="#3a80ee"/>
<clipPath id="cav"><circle cx="526" cy="1030.8" r="11.8"/></clipPath>
<g clip-path="url(#cav)"><circle cx="526" cy="1030.8" r="11.8" fill="#d4d6dc"/><path d="M519 1029Q519 1020 526.5 1020Q533 1020 533 1028Q533 1036 529 1038Q523 1038 519 1029Z" fill="#9a8478"/><path d="M518.5 1028Q518 1019 526.5 1019.5Q533.5 1020 533.5 1027Q530 1023 524 1025Q521 1026 520.5 1031Z" fill="#1c1a1c"/><path d="M513 1043Q516 1035 522 1036L527 1039.5L533 1035Q538 1036 539 1043Z" fill="#22222a"/></g>
<circle cx="526" cy="1030.8" r="11.8" fill="none" stroke="#b8b4c0" stroke-width="0.8"/>
<rect x="508" y="1068.3" width="9" height="4.6" rx="2.3" fill="#88868e"/>
<path d="M566 1061Q559 1048 562.5 1039Q565 1028 577 1026.5Q588 1026 591.5 1033Q596.5 1042 594 1052Q593 1059 590 1061.3H583.5L583 1052Q580 1050.5 577 1052L576.5 1061.3H570L569.5 1056Q568 1059.5 566 1061Z" fill="#14aaea"/>
<path d="M577 1035Q586 1033 588 1041Q589 1048 584 1052" fill="none" stroke="#0c8ccc" stroke-width="1"/><path d="M564.5 1045L567.5 1046.5L568 1058L566.5 1052Z" fill="#f4f4f4"/><path d="M568 1042.5Q570 1040.5 572 1042.5" fill="none" stroke="#0c7cc0" stroke-width="0.9"/>
<rect x="626.5" y="1027.3" width="34.7" height="29.5" fill="#022c3c" stroke="#4c727a" stroke-width="1.2"/><path d="M636 1061.7L637.5 1059H650.5L652 1061.7Z" fill="#12404e"/>
<path d="M652.6 1034.6H636.3V1049.4H652.6M640 1042H652.6" fill="none" stroke="#fffbdc" stroke-width="1.7"/>
<circle cx="709.5" cy="1043.7" r="14.7" fill="#c8001e"/><path d="M703.2 1055V1034.6H710Q715.6 1034.6 715.6 1039.8Q715.6 1045 710 1045H703.2M709 1045L716.6 1055" fill="none" stroke="#3a90d4" stroke-width="2.1"/>
<circle cx="775.5" cy="1043.7" r="16.3" fill="#147a5a"/><path d="M768.5 1039.2H776.8V1054M768 1054.6H783.6" fill="none" stroke="#c8c8c8" stroke-width="2.3"/><rect x="775" y="1031.6" width="2.8" height="3" fill="#c8c8c8"/>
<circle cx="841.4" cy="1043.6" r="16.3" fill="#2e5878"/><path d="M834.2 1054.4L842.1 1030.6L850.2 1054.4M836.8 1047.2H847.6" fill="none" stroke="#18d0c8" stroke-width="2.1"/>
<rect x="880" y="1016" width="56" height="57" rx="6" fill="#f7eef3" stroke="#eadfe6" stroke-width="0.8"/>
<circle cx="907.5" cy="1043.6" r="16.4" fill="#5a005a"/><path d="M913.6 1031.7V1049.5Q913.6 1055.6 907 1055.6Q901.4 1055.6 900.6 1050" fill="none" stroke="#ff1a78" stroke-width="2.3"/>
<rect x="896" y="1068" width="23.7" height="5" rx="2.5" fill="#0a78d4"/>
<rect x="956" y="1026" width="35.8" height="35.8" rx="3" fill="#464646"/><path d="M965 1038L983 1032V1039.5L965 1045.5Z M983 1047V1054.5L965 1060V1052.5Z M965 1038L983 1047V1054.5L965 1045.5Z" fill="#ff9800"/><path d="M965 1045.5L983 1054.5V1050.5L968 1043Z" fill="#e88a00" opacity="0.6"/>
<path d="M1048.5 1026L1058 1030.5V1057.2L1048.5 1061.7Z" fill="url(#gvs)"/><path d="M1048.5 1026L1024.5 1047.8Q1022 1050 1024 1052L1026.5 1054L1048.5 1036.5Z" fill="#1888d8"/><path d="M1048.5 1061.7L1024.5 1039.9Q1022 1037.7 1024 1035.7L1026.5 1033.7L1048.5 1051.2Z" fill="#0c78c8"/>
<path d="M1531.8 1047.5L1539.2 1040.2L1546.6 1047.5" fill="none" stroke="#1c1c1c" stroke-width="1.9"/>
<g fill="none" stroke="#1c1c1c" stroke-width="2.1" stroke-linecap="round"><path d="M1642 1041.2A15.8 15.8 0 0 1 1664.2 1041.2"/><path d="M1645.6 1045A10.6 10.6 0 0 1 1660.6 1045"/><path d="M1649.2 1048.4A5.4 5.4 0 0 1 1656.8 1048.4"/></g><circle cx="1653" cy="1050" r="2.1" fill="#1c1c1c"/>
<path d="M1678.2 1040.6H1681.4L1686.2 1036.4V1051.6L1681.4 1047.4H1678.2Z" fill="none" stroke="#1c1c1c" stroke-width="1.7" stroke-linejoin="round"/><path d="M1689.6 1040.4Q1692 1044 1689.6 1047.6M1693 1037.6Q1697.2 1044 1693 1050.4" fill="none" stroke="#1c1c1c" stroke-width="1.7" stroke-linecap="round"/><path d="M1696.6 1035Q1702.4 1044 1696.6 1053" fill="none" stroke="#b9b7c6" stroke-width="1.6" stroke-linecap="round"/>
<rect x="1714" y="1037.4" width="19.4" height="12.8" rx="3.2" fill="none" stroke="#1c1c1c" stroke-width="1.7"/><path d="M1720.6 1040.4H1730.6V1047.4H1716.8Z" fill="#1c1c1c"/><rect x="1733.6" y="1041" width="3.6" height="5.6" rx="1.6" fill="#1c1c1c"/><path d="M1718.2 1032.2L1713.4 1040.8H1716.6L1715 1046L1720.8 1037.4H1717.8L1719.8 1032.2Z" fill="#1c1c1c" stroke="#e2e0f0" stroke-width="1.7" paint-order="stroke"/>
<path d="M1870 1049.6Q1872 1047 1872 1042Q1872 1035 1878.2 1035Q1884.4 1035 1884.4 1042Q1884.4 1047 1886.4 1049.6Z" fill="none" stroke="#1c1c1c" stroke-width="1.6" stroke-linejoin="round"/><path d="M1875.4 1050.2Q1875.8 1053.2 1878.2 1053.2Q1880.6 1053.2 1881 1050.2" fill="none" stroke="#1c1c1c" stroke-width="1.5"/>
</svg>
<span class="t" style="left:248.60px;top:1022px;font-size:16.2px;line-height:16.2px;color:#111;letter-spacing:0.301px;">25°</span>
<span class="t" style="left:1578.30px;top:1037px;font-size:16.2px;line-height:16.2px;color:#111;letter-spacing:0.265px;">ENG</span>
<span class="t" style="left:1788.50px;top:1024px;font-size:16.2px;line-height:16.2px;color:#111;letter-spacing:1.152px;">5:26 AM</span>
<span class="t" style="left:1762.00px;top:1048px;font-size:16.2px;line-height:16.2px;color:#111;letter-spacing:1.292px;">15/12/2023</span>
</footer>
</body></html>
